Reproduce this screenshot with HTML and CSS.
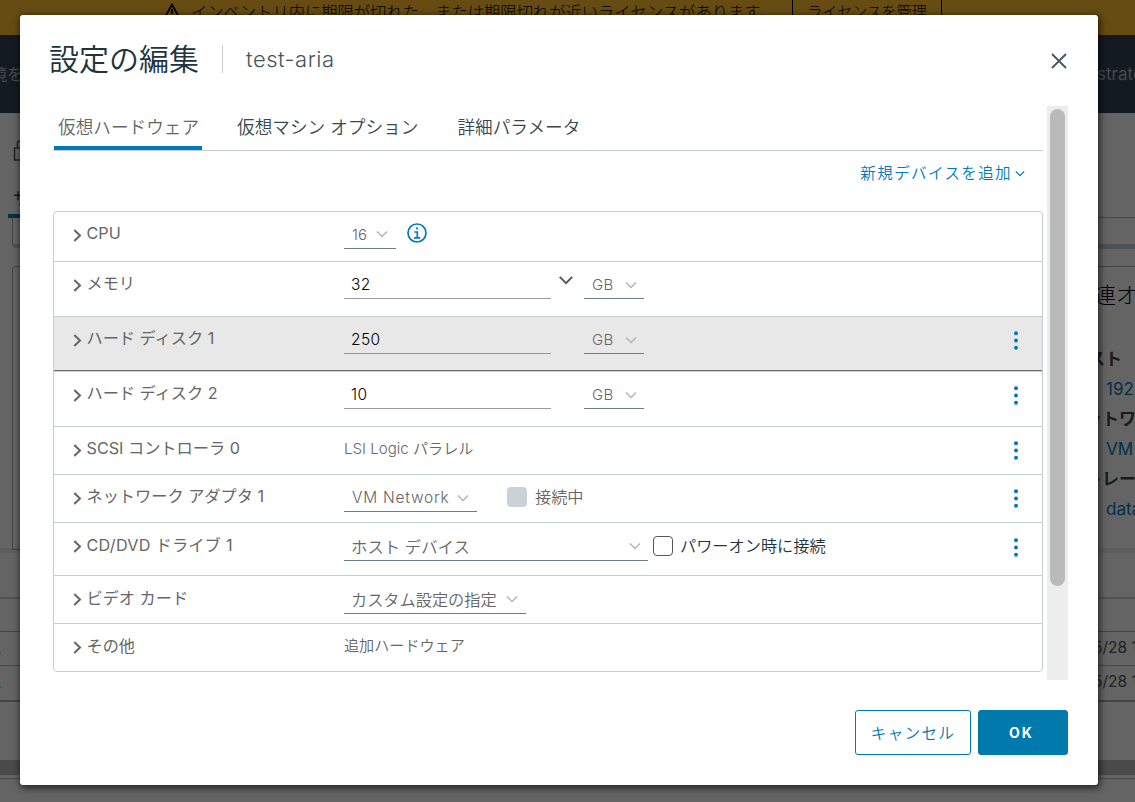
FILE: index.html
```
<!DOCTYPE html>
<html lang="ja">
<head>
    <meta charset="UTF-8">
    <meta name="viewport" content="width=device-width, initial-scale=1.0">
    <title>設定の編集</title>
    <link rel="stylesheet" href="styles.css">
</head>
<body>
    <svg class="defs">
        <symbol id="caret" viewBox="0 0 12 8"><path d="M1 1.5 L6 6.5 L11 1.5"/></symbol>
        <symbol id="angle" viewBox="0 0 9 13"><path d="M1.3 1 L7 6.5 L1.3 12"/></symbol>
        <symbol id="dots" viewBox="0 0 4 19"><circle cx="2" cy="2.2" r="2"/><circle cx="2" cy="9.5" r="2"/><circle cx="2" cy="16.8" r="2"/></symbol>
    </svg>

    <!-- page behind the dialog -->
    <div class="page">
        <div class="banner">
            <svg class="warn" viewBox="0 0 18 17"><path d="M9 1.5 L17 16 H1 Z M9 6 V11"/></svg>
            <span class="banner-text">インベントリ内に期限が切れた、または期限切れが近いライセンスがあります。</span>
            <span class="banner-btn">ライセンスを管理</span>
        </div>
        <div class="topbar"><span class="env">境を</span><span class="user">strator</span></div>
        <div class="summary">
            <div class="side">
                <svg class="lock" viewBox="0 0 12 22"><path d="M12 8 H1.5 V20 H12 M4.5 8 V3 Q4.5 1 7 1 H12"/></svg>
                <div class="side-tab">サ</div>
                <div class="side-box"></div>
                <div class="side-card"></div>
            </div>
            <div class="related">
                <div class="line"></div>
                <div class="thick"></div>
                <div class="related-card">
                    <h3>連オ</h3>
                    <b>スト</b>
                    <a>192.</a>
                    <b>ットワ</b>
                    <a>VM</a>
                    <b>トレー</b>
                    <a>data</a>
                </div>
            </div>
        </div>
        <div class="tasks">
            <div class="task-head"></div>
            <div class="task-row cols"></div>
            <div class="task-row"><a>.</a><span>5/28 1</span></div>
            <div class="task-row last"><a>.</a><span>5/28 1</span></div>
            <div class="task-gap"></div>
            <div class="task-scroll"></div>
            <div class="task-foot"></div>
        </div>
    </div>

    <div class="backdrop">
        <div class="modal">
            <div class="modal-header">
                <h1>設定の編集</h1>
                <span class="vm-name">test-aria</span>
                <svg class="close" viewBox="0 0 16 16"><path d="M1 1 L15 15 M15 1 L1 15"/></svg>
            </div>

            <div class="modal-body">
                <div class="content">
                    <div class="tabs">
                        <div class="tab active">仮想ハードウェア</div>
                        <div class="tab">仮想マシン オプション</div>
                        <div class="tab">詳細パラメータ</div>
                    </div>
                    <div class="add-device"><span>新規デバイスを追加</span><svg class="caret"><use href="#caret"/></svg></div>

                    <div class="hardware">
                        <div class="row cpu">
                            <svg class="angle"><use href="#angle"/></svg>
                            <div class="label">CPU</div>
                            <div class="controls">
                                <div class="select small">16<svg class="caret"><use href="#caret"/></svg></div>
                                <svg class="info" viewBox="0 0 20 20"><circle cx="10" cy="10" r="9"/><path d="M10 4.2 V6.4 M7.4 9 H10.3 V14.8 M7 14.8 H13.2"/></svg>
                            </div>
                        </div>
                        <div class="row tall">
                            <svg class="angle"><use href="#angle"/></svg>
                            <div class="label">メモリ</div>
                            <div class="controls">
                                <div class="input">32</div>
                                <svg class="caret drop"><use href="#caret"/></svg>
                                <div class="select unit">GB<svg class="caret"><use href="#caret"/></svg></div>
                            </div>
                        </div>
                        <div class="row tall hover">
                            <svg class="angle"><use href="#angle"/></svg>
                            <div class="label">ハード ディスク 1</div>
                            <div class="controls">
                                <div class="input">250</div>
                                <div class="select unit">GB<svg class="caret"><use href="#caret"/></svg></div>
                            </div>
                            <svg class="dots"><use href="#dots"/></svg>
                        </div>
                        <div class="row tall">
                            <svg class="angle"><use href="#angle"/></svg>
                            <div class="label">ハード ディスク 2</div>
                            <div class="controls">
                                <div class="input">10</div>
                                <div class="select unit">GB<svg class="caret"><use href="#caret"/></svg></div>
                            </div>
                            <svg class="dots"><use href="#dots"/></svg>
                        </div>
                        <div class="row">
                            <svg class="angle"><use href="#angle"/></svg>
                            <div class="label">SCSI コントローラ 0</div>
                            <div class="controls"><div class="text">LSI Logic パラレル</div></div>
                            <svg class="dots"><use href="#dots"/></svg>
                        </div>
                        <div class="row">
                            <svg class="angle"><use href="#angle"/></svg>
                            <div class="label">ネットワーク アダプタ 1</div>
                            <div class="controls">
                                <div class="select network">VM Network<svg class="caret"><use href="#caret"/></svg></div>
                                <i class="check disabled"></i>
                                <span class="check-label muted">接続中</span>
                            </div>
                            <svg class="dots"><use href="#dots"/></svg>
                        </div>
                        <div class="row cd">
                            <svg class="angle"><use href="#angle"/></svg>
                            <div class="label cd-label">CD/DVD ドライブ 1</div>
                            <div class="controls">
                                <div class="select host">ホスト デバイス<svg class="caret"><use href="#caret"/></svg></div>
                                <i class="check"></i>
                                <span class="check-label">パワーオン時に接続</span>
                            </div>
                            <svg class="dots"><use href="#dots"/></svg>
                        </div>
                        <div class="row video">
                            <svg class="angle"><use href="#angle"/></svg>
                            <div class="label">ビデオ カード</div>
                            <div class="controls">
                                <div class="select custom">カスタム設定の指定<svg class="caret"><use href="#caret"/></svg></div>
                            </div>
                        </div>
                        <div class="row other">
                            <svg class="angle"><use href="#angle"/></svg>
                            <div class="label">その他</div>
                            <div class="controls"><div class="text">追加ハードウェア</div></div>
                        </div>
                    </div>
                </div>
                <div class="scrollbar"><div class="thumb"></div></div>
            </div>

            <div class="modal-footer">
                <button class="btn cancel">キャンセル</button>
                <button class="btn ok">OK</button>
            </div>
        </div>
    </div>
</body>
</html>
```
FILE: styles.css
```
* {
    box-sizing: border-box;
}

body {
    margin: 0;
    width: 1135px;
    height: 802px;
    overflow: hidden;
    background: #fafafa;
    font-family: Inter, "Noto Sans CJK JP", sans-serif;
    font-size: 16px;
    color: #666;
    white-space: nowrap;
}

h1, h3 {
    margin: 0;
    font-weight: 300;
}

svg {
    fill: none;
    stroke: currentColor;
    flex: none;
}

.defs {
    display: none;
}

/* page */
.page {
    height: 802px;
    overflow: hidden;
}

.banner {
    display: flex;
    height: 35px;
    padding-left: 163px;
    background: #ffbf2d;
    color: #000;
    font-weight: 300;
}

.warn {
    width: 18px;
    height: 17px;
    margin-top: 3px;
    stroke-width: 1.8;
}

.banner-text {
    width: 600px;
    margin-left: 10px;
    line-height: 24px;
    font-size: 16.3px;
}

.banner-btn {
    width: 150px;
    height: 24px;
    margin-left: 1px;
    border: 1px solid #000;
    border-top: 0;
    text-align: center;
    font-size: 15px;
    line-height: 23px;
}

.topbar {
    display: flex;
    justify-content: space-between;
    height: 78px;
    padding-top: 27px;
    background: #304250;
    color: #aeb6bc;
    line-height: 24px;
}

.env {
    margin-left: -9px;
}

.user {
    width: 38px;
    font-size: 17px;
}

.summary {
    display: flex;
    justify-content: space-between;
    height: 435px;
}

.side {
    width: 60px;
    padding: 27px 0 0 8px;
}

.lock {
    display: block;
    width: 12px;
    height: 22px;
    margin-left: 5px;
    stroke: #555;
    stroke-width: 1.5;
}

.side-tab {
    height: 56px;
    padding: 23px 0 0 5px;
    border-bottom: 4px solid #0079b8;
    color: #222;
}

.side-box {
    height: 30px;
    margin-left: 4px;
    border-left: 1px solid #aaa;
    border-bottom: 4px solid #c5ced4;
    border-radius: 0 0 0 4px;
}

.side-card {
    height: 284px;
    margin: 18px 0 0 4px;
    border: 1px solid #aaa;
    border-right: 0;
    border-radius: 4px 0 0 0;
}

.related {
    width: 50px;
    padding-top: 104px;
}

.line {
    height: 27px;
    border-top: 1px solid #aaa;
}

.thick {
    height: 5px;
    margin-bottom: 17px;
    background: #c5ced4;
}

.related-card {
    height: 283px;
    padding-top: 12px;
    border-top: 1px solid #aaa;
}

.related-card h3 {
    height: 65px;
    padding-left: 9px;
    color: #000;
    font-size: 22px;
    line-height: 32px;
}

.related-card b, .related-card a {
    display: block;
    height: 30px;
    line-height: 30px;
    color: #0079b8;
    padding-left: 21px;
    font-size: 17px;
}

.related-card b {
    padding-left: 3px;
    color: #444;
}

.related-card b:nth-of-type(n+2) {
    padding-left: 0;
}

.task-head {
    height: 51px;
    border-top: 5px solid #e8e8e8;
    border-bottom: 2px solid #c5ced4;
}

.task-row {
    display: flex;
    justify-content: space-between;
    height: 34px;
    border-bottom: 1px solid #aaa;
    line-height: 32px;
    color: #555;
}

.task-row.cols {
    height: 33px;
}

.task-row.last {
    height: 36px;
    border-bottom-width: 2px;
}

.task-row a {
    margin-left: -3px;
    color: #0079b8;
}

.task-row span {
    width: 42px;
    font-size: 15.5px;
}

.task-gap {
    height: 58px;
}

.task-scroll {
    height: 15px;
    background: #b8b8b8;
}

.task-foot {
    margin-top: 3px;
    border-top: 1px solid #bbb;
}

/* dialog */
.backdrop {
    position: absolute;
    inset: 0;
    padding: 15px 37px 17px 20px;
    background: rgba(0, 0, 0, 0.6);
}

.modal {
    height: 770px;
    padding: 30px 30px 0;
    background: #fff;
    border-radius: 3px;
    box-shadow: 1px 2px 7px 1px rgba(0, 0, 0, 0.65);
}

.modal-header {
    display: flex;
    height: 61px;
    color: #21333b;
}

.modal-header h1 {
    width: 173px;
    height: 28px;
    border-right: 1px solid #ccc;
    font-size: 30px;
    font-weight: 350;
    line-height: 28px;
    text-indent: -1px;
}

.vm-name {
    margin-left: 23px;
    color: #45555d;
    font-size: 22px;
    font-weight: 300;
    letter-spacing: 0.5px;
    line-height: 28px;
}

.close {
    width: 16px;
    height: 16px;
    margin: 8px 1px 0 auto;
    color: #45555d;
    stroke-width: 1.8;
}

.modal-body {
    display: flex;
    height: 574px;
    padding-left: 3px;
}

.content {
    width: 990px;
}

.tabs {
    display: flex;
    gap: 31px;
    height: 45px;
    padding-left: 1px;
    border-bottom: 1px solid #c5ced4;
    color: #37474f;
    font-size: 17.65px;
    font-weight: 350;
}

.tab {
    height: 44px;
    padding: 0 4px;
    line-height: 44px;
}

.tab.active {
    width: 148px;
    border-bottom: 4px solid #0079b8;
    color: #666;
}

.add-device {
    display: flex;
    justify-content: flex-end;
    align-items: center;
    height: 60px;
    padding: 0 18px 18px 0;
    color: #0079b8;
    font-size: 15.5px;
    font-weight: 350;
    letter-spacing: 1.4px;
}

.add-device .caret {
    width: 10px;
    height: 7px;
    margin: 2px 0 0 3px;
    color: #0079b8;
}

.hardware {
    height: 461px;
    border: 1px solid #c5ced4;
    border-radius: 4px;
}

.row {
    display: flex;
    height: 48px;
    padding: 0 24px 0 19px;
    border-bottom: 1px solid #c5d0d6;
}

.row:last-child {
    border: 0;
}

.row.cpu {
    height: 50px;
}

.row.tall {
    height: 55px;
}

.row.cd {
    height: 53px;
}

.row.hover {
    background: #e8e8e8;
    box-shadow: inset 0 -1px #6b6f72;
}

.angle {
    width: 9px;
    height: 13px;
    margin: 17px 5px 0 0;
    stroke-width: 2;
}

.label {
    width: 257px;
    height: 26px;
    margin-top: 8px;
    font-size: 16.2px;
    line-height: 26px;
    text-indent: -0.5px;
}

.cd .label, .video .label, .other .label {
    margin-top: 9px;
}

.cd-label {
    letter-spacing: 0.25px;
}

.controls {
    display: flex;
    flex: 1;
    margin-top: 12px;
}

.cd .controls, .video .controls {
    margin-top: 13px;
}

.select {
    display: flex;
    justify-content: space-between;
    align-items: center;
    height: 25px;
    padding: 0 8px 3px;
    border-bottom: 1px solid #6b7d85;
    font-size: 15px;
    font-weight: 350;
}

.caret {
    width: 12px;
    height: 8px;
    color: #b5b5b5;
    stroke-width: 1.5;
}

.small {
    width: 52px;
}

.small .caret {
    margin-bottom: 2px;
}

.unit {
    width: 60px;
    margin-left: 33px;
    padding-right: 7px;
    letter-spacing: 0.3px;
}

.drop {
    width: 16px;
    height: 10px;
    margin: 1px -23px 0 7px;
    color: #555;
}

.info {
    width: 20px;
    height: 20px;
    margin-left: 11px;
    margin-top: -1px;
    color: #0079b8;
    stroke-width: 1.7;
}

.input {
    width: 207px;
    height: 25px;
    padding-left: 7px;
    border-bottom: 1px solid #999;
    color: #000;
    font-size: 15.5px;
    line-height: 22px;
    letter-spacing: 0.4px;
    font-weight: 350;
}

.dots {
    width: 4px;
    height: 19px;
    margin-top: 14px;
    fill: #0079b8;
    stroke: none;
}

.cd .dots {
    margin-top: 15px;
}

.text {
    font-size: 15.1px;
    font-weight: 350;
    line-height: 20px;
}

.network {
    width: 133px;
    margin-right: 30px;
    font-size: 15.5px;
    letter-spacing: 0.75px;
}

.host {
    width: 304px;
    margin-right: 5px;
    padding-left: 7px;
    padding-right: 7px;
    padding-bottom: 5px;
    font-size: 16.4px;
}

.custom {
    width: 182px;
    padding-left: 7px;
    padding-bottom: 5px;
    font-size: 16.2px;
}

.check {
    width: 20px;
    height: 20px;
    border: 1px solid #555;
    border-radius: 4px;
}

.check.disabled {
    border: 0;
    background: #c9d2d8;
}

.check-label {
    margin-left: 7px;
    color: #21333b;
    font-size: 16.2px;
    font-weight: 350;
    line-height: 20px;
}

.check-label.muted {
    margin-left: 8px;
    color: #666;
}

.modal-footer {
    display: flex;
    justify-content: flex-end;
    gap: 7px;
    padding-top: 30px;
}

.scrollbar {
    width: 21px;
    height: 574px;
    margin-left: 4px;
    padding: 3px;
    background: #ededed;
}

.thumb {
    height: 477px;
    border-radius: 8px;
    background: #bababa;
}

.btn {
    width: 116px;
    height: 45px;
    padding: 0 0 2px;
    border: 1px solid #0079ad;
    border-radius: 3px;
    background: #fff;
    color: #0079ad;
    font-family: inherit;
    font-size: 15.6px;
    font-weight: 350;
    letter-spacing: 1.3px;
}

.btn.ok {
    width: 90px;
    padding: 0 3px 0 0;
    background: #0079ad;
    color: #fff;
    font-size: 14px;
    font-weight: 700;
    letter-spacing: 2px;
}
```
